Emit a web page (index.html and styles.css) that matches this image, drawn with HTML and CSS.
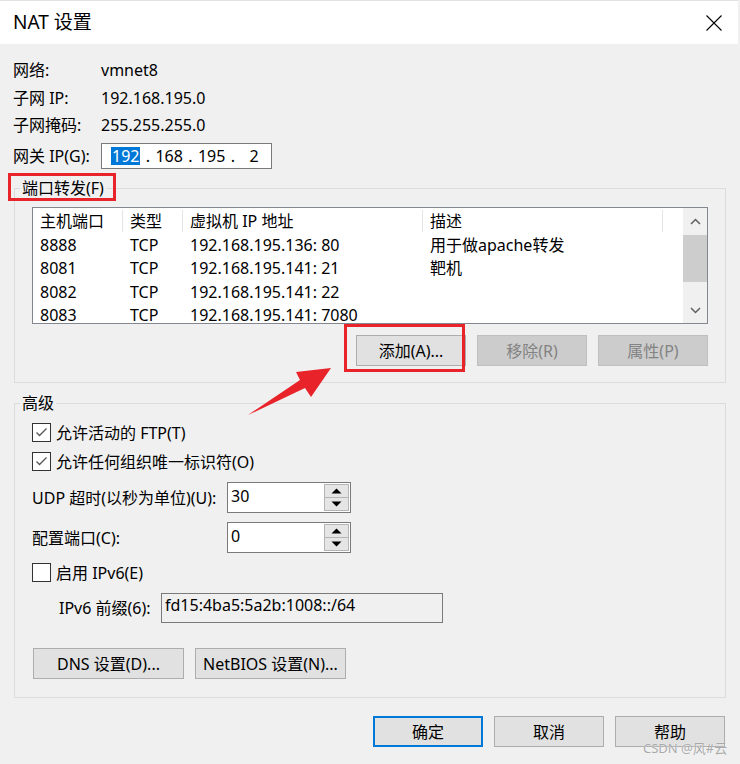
FILE: index.html
```html
<!DOCTYPE html>
<html lang="zh-CN">
<head>
<meta charset="utf-8">
<title>NAT 设置</title>
<link rel="stylesheet" href="styles.css">
</head>
<body>
<div class="dialog">
  <div class="titlebar">
    <span class="title">NAT 设置</span>
    <svg class="close" width="16" height="16" viewBox="0 0 16 16"><path d="M0.5 0.5 L15.5 15.5 M15.5 0.5 L0.5 15.5" stroke="#000" stroke-width="1.1" fill="none"/></svg>
  </div>

  <div class="info">
    <span>网络:</span><span>vmnet8</span>
    <span>子网 IP:</span><span>192.168.195.0</span>
    <span>子网掩码:</span><span>255.255.255.0</span>
  </div>

  <div class="gw-row">
    <span class="gw-label">网关 IP(G):</span>
    <div class="ipbox">
      <span class="oct sel">192</span><span class="dot">.</span><span class="oct">168</span><span class="dot">.</span><span class="oct">195</span><span class="dot">.</span><span class="oct last">2</span>
    </div>
  </div>

  <fieldset class="group group-port">
    <legend class="legend marked">端口转发(F)</legend>
    <div class="listview">
      <div class="lv-main">
        <div class="lv-row lv-head">
          <span class="c c1">主机端口</span><span class="c c2">类型</span><span class="c c3">虚拟机 IP 地址</span><span class="c c4">描述</span>
        </div>
        <div class="lv-row"><span class="c c1">8888</span><span class="c c2">TCP</span><span class="c c3">192.168.195.136: 80</span><span class="c c4">用于做apache转发</span></div>
        <div class="lv-row"><span class="c c1">8081</span><span class="c c2">TCP</span><span class="c c3">192.168.195.141: 21</span><span class="c c4">靶机</span></div>
        <div class="lv-row"><span class="c c1">8082</span><span class="c c2">TCP</span><span class="c c3">192.168.195.141: 22</span><span class="c c4"></span></div>
        <div class="lv-row"><span class="c c1">8083</span><span class="c c2">TCP</span><span class="c c3">192.168.195.141: 7080</span><span class="c c4"></span></div>
      </div>
      <div class="lv-scroll">
        <div class="sb-btn"><svg width="11" height="7" viewBox="0 0 11 7"><path d="M1 6 L5.5 1.5 L10 6" stroke="#606060" stroke-width="1.5" fill="none"/></svg></div>
        <div class="sb-thumb"></div>
        <div class="sb-track"></div>
        <div class="sb-btn"><svg width="11" height="7" viewBox="0 0 11 7"><path d="M1 1 L5.5 5.5 L10 1" stroke="#606060" stroke-width="1.5" fill="none"/></svg></div>
      </div>
    </div>
    <div class="btn-row">
      <div class="btn btn-marked">添加(A)...</div>
      <div class="btn disabled">移除(R)</div>
      <div class="btn disabled">属性(P)</div>
    </div>
  </fieldset>

  <fieldset class="group group-adv">
    <legend class="legend">高级</legend>
    <div class="chk-row"><span class="chk"><svg width="17" height="17" viewBox="0 0 17 17"><path d="M3.5 8.5 L6.5 11.5 L13.5 4.5" stroke="#555" stroke-width="1.3" fill="none"/></svg></span><span>允许活动的 FTP(T)</span></div>
    <div class="chk-row"><span class="chk"><svg width="17" height="17" viewBox="0 0 17 17"><path d="M3.5 8.5 L6.5 11.5 L13.5 4.5" stroke="#555" stroke-width="1.3" fill="none"/></svg></span><span>允许任何组织唯一标识符(O)</span></div>
    <div class="spin-row first">
      <span class="spin-label">UDP 超时(以秒为单位)(U):</span>
      <div class="spin">
        <span class="spin-val">30</span>
        <div class="spin-btns">
          <div class="sp-btn"><svg width="11" height="6" viewBox="0 0 11 6"><path d="M0.5 5.5 L5.5 0.5 L10.5 5.5 Z" fill="#000"/></svg></div>
          <div class="sp-btn"><svg width="11" height="6" viewBox="0 0 11 6"><path d="M0.5 0.5 L5.5 5.5 L10.5 0.5 Z" fill="#000"/></svg></div>
        </div>
      </div>
    </div>
    <div class="spin-row">
      <span class="spin-label">配置端口(C):</span>
      <div class="spin">
        <span class="spin-val">0</span>
        <div class="spin-btns">
          <div class="sp-btn"><svg width="11" height="6" viewBox="0 0 11 6"><path d="M0.5 5.5 L5.5 0.5 L10.5 5.5 Z" fill="#000"/></svg></div>
          <div class="sp-btn"><svg width="11" height="6" viewBox="0 0 11 6"><path d="M0.5 0.5 L5.5 5.5 L10.5 0.5 Z" fill="#000"/></svg></div>
        </div>
      </div>
    </div>
    <div class="chk-row ipv6-chk"><span class="chk"></span><span>启用 IPv6(E)</span></div>
    <div class="prefix-row">
      <span class="prefix-label">IPv6 前缀(6):</span>
      <div class="prefix-box">fd15:4ba5:5a2b:1008::/64</div>
    </div>
    <div class="adv-btns">
      <div class="btn wide">DNS 设置(D)...</div>
      <div class="btn wide">NetBIOS 设置(N)...</div>
    </div>
  </fieldset>

  <div class="footer">
    <div class="btn default">确定</div>
    <div class="btn">取消</div>
    <div class="btn">帮助</div>
  </div>
</div>

<svg class="arrow" width="740" height="764" viewBox="0 0 740 764">
  <polygon points="248,415 300,380 296,372 331,368 311,397 305,388" fill="#e8232a"/>
</svg>
<div class="watermark">CSDN @风#云</div>
</body>
</html>
```

FILE: styles.css
```css
*, *::before, *::after { box-sizing: border-box; }

body {
  margin: 0;
  width: 740px;
  height: 764px;
  overflow: hidden;
  position: relative;
  background: #f0f0f0;
  color: #000;
  font-family: "Noto Sans", "Noto Sans CJK SC", sans-serif;
  font-size: 16px;
  line-height: 20px;
}

.dialog {
  width: 738px;
}

.titlebar {
  height: 44px;
  background: #fff;
  border-top: 1px solid #e2e2e2;
  display: flex;
  align-items: center;
  justify-content: space-between;
  padding: 0 16px 0 13px;
}

.title {
  font-size: 19px;
  line-height: 24px;
  margin-top: -2px;
}

.close {
  display: block;
  margin-top: 1px;
}

.info {
  display: grid;
  grid-template-columns: 88px auto;
  grid-template-rows: 28px 27px 28px;
  align-items: center;
  margin: 12px 0 0 13px;
}

.gw-row {
  display: flex;
  align-items: center;
  margin: 4px 0 0 13px;
  height: 26px;
}

.gw-label {
  width: 88px;
}

.ipbox {
  width: 171px;
  height: 26px;
  border: 1px solid #7a7a7a;
  background: #fff;
  display: flex;
  align-items: center;
  padding-left: 9px;
}

.oct {
  display: inline-block;
  line-height: 18px;
}

.oct.sel {
  background: #0078d7;
  color: #fff;
  padding: 0 1px;
}

.dot {
  display: inline-block;
  width: 15px;
  text-align: center;
}

.oct.last {
  margin-left: 9px;
}

.group {
  margin: 9px 12px 0 14px;
  border: 1px solid #dcdcdc;
  padding: 9px 17px 16px 17px;
  min-width: 0;
}

.legend {
  padding: 0 2px;
  margin-left: -12px;
  line-height: 20px;
  height: 20px;
  position: relative;
}

.legend.marked::after {
  content: "";
  position: absolute;
  left: -12px;
  top: -5px;
  width: 108px;
  height: 28px;
  border: 3px solid #e8232a;
}

.listview {
  display: flex;
  height: 117px;
  border: 1px solid #828790;
  background: #fff;
}

.lv-main {
  flex: 1;
  overflow: hidden;
}

.lv-row {
  display: flex;
  height: 23.5px;
  line-height: 16px;
  align-items: center;
  white-space: nowrap;
}

.lv-head {
  height: 25px;
}

.c {
  padding-left: 7px;
  flex: none;
}

.c1 { width: 90px; }
.c2 { width: 60px; }
.c3 { width: 240px; }
.c4 { width: 240px; }

.lv-head .c {
  border-right: 1px solid #e5e5e5;
  height: 22px;
  line-height: 22px;
}

.lv-scroll {
  width: 24px;
  background: #f0f0f0;
  display: flex;
  flex-direction: column;
}

.sb-btn {
  height: 27px;
  display: flex;
  align-items: center;
  justify-content: center;
}

.sb-btn:last-child {
  height: 26px;
}

.sb-thumb {
  height: 47px;
  background: #cdcdcd;
}

.sb-track {
  flex: 1;
}

.btn {
  height: 31px;
  width: 110px;
  background: #e1e1e1;
  border: 1px solid #adadad;
  display: flex;
  align-items: center;
  justify-content: center;
}

.btn.disabled {
  background: #cccccc;
  border-color: #bfbfbf;
  color: #838383;
}

.btn.default {
  border: 2px solid #0078d7;
}

.btn-row {
  display: flex;
  justify-content: flex-end;
  gap: 11px;
  margin-top: 11px;
}

.btn-marked {
  position: relative;
}

.btn-marked::after {
  content: "";
  position: absolute;
  left: -13px;
  top: -12px;
  width: 121px;
  height: 48px;
  border: 3px solid #e8232a;
}

.group-adv {
  margin-top: 10px;
  padding: 5px 17px 18px 17px;
}

.chk-row {
  display: flex;
  align-items: center;
  height: 29px;
  gap: 5px;
}

.chk {
  width: 19px;
  height: 19px;
  border: 1px solid #333;
  background: #fff;
  display: flex;
  align-items: center;
  justify-content: center;
}

.spin-row {
  display: flex;
  align-items: center;
  margin-top: 9px;
}

.spin-row.first {
  margin-top: 6px;
}

.spin-label {
  width: 195px;
}

.spin {
  width: 124px;
  height: 31px;
  border: 1px solid #7a7a7a;
  background: #fff;
  display: flex;
}

.spin-val {
  flex: 1;
  padding: 3px 0 0 3px;
  line-height: 20px;
}

.spin-btns {
  width: 26px;
  display: flex;
  flex-direction: column;
  padding: 1px 1px 1px 0;
}

.sp-btn {
  flex: 1;
  background: #e5e5e5;
  border: 1px solid #b5b5b5;
  display: flex;
  align-items: center;
  justify-content: center;
}

.sp-btn + .sp-btn {
  border-top: none;
}

.ipv6-chk {
  margin-top: 5px;
}

.prefix-row {
  display: flex;
  align-items: center;
  margin: 6px 0 0 27px;
}

.prefix-label {
  width: 102px;
}

.prefix-box {
  width: 282px;
  height: 30px;
  border: 1px solid #7a7a7a;
  padding: 1px 0 0 3px;
  line-height: 20px;
}

.adv-btns {
  display: flex;
  gap: 11px;
  margin-top: 25px;
  padding-left: 1px;
}

.btn.wide {
  width: 151px;
  height: 31px;
}

.footer {
  display: flex;
  justify-content: flex-end;
  gap: 11px;
  margin: 18px 13px 0 0;
}

.footer .btn {
  height: 31px;
}

.arrow {
  position: absolute;
  left: 0;
  top: 0;
  pointer-events: none;
}

.watermark {
  position: absolute;
  left: 643px;
  top: 740px;
  font-size: 13px;
  line-height: 16px;
  color: #a9a9a9;
  text-shadow: 0 0 1px #fff;
}
```
